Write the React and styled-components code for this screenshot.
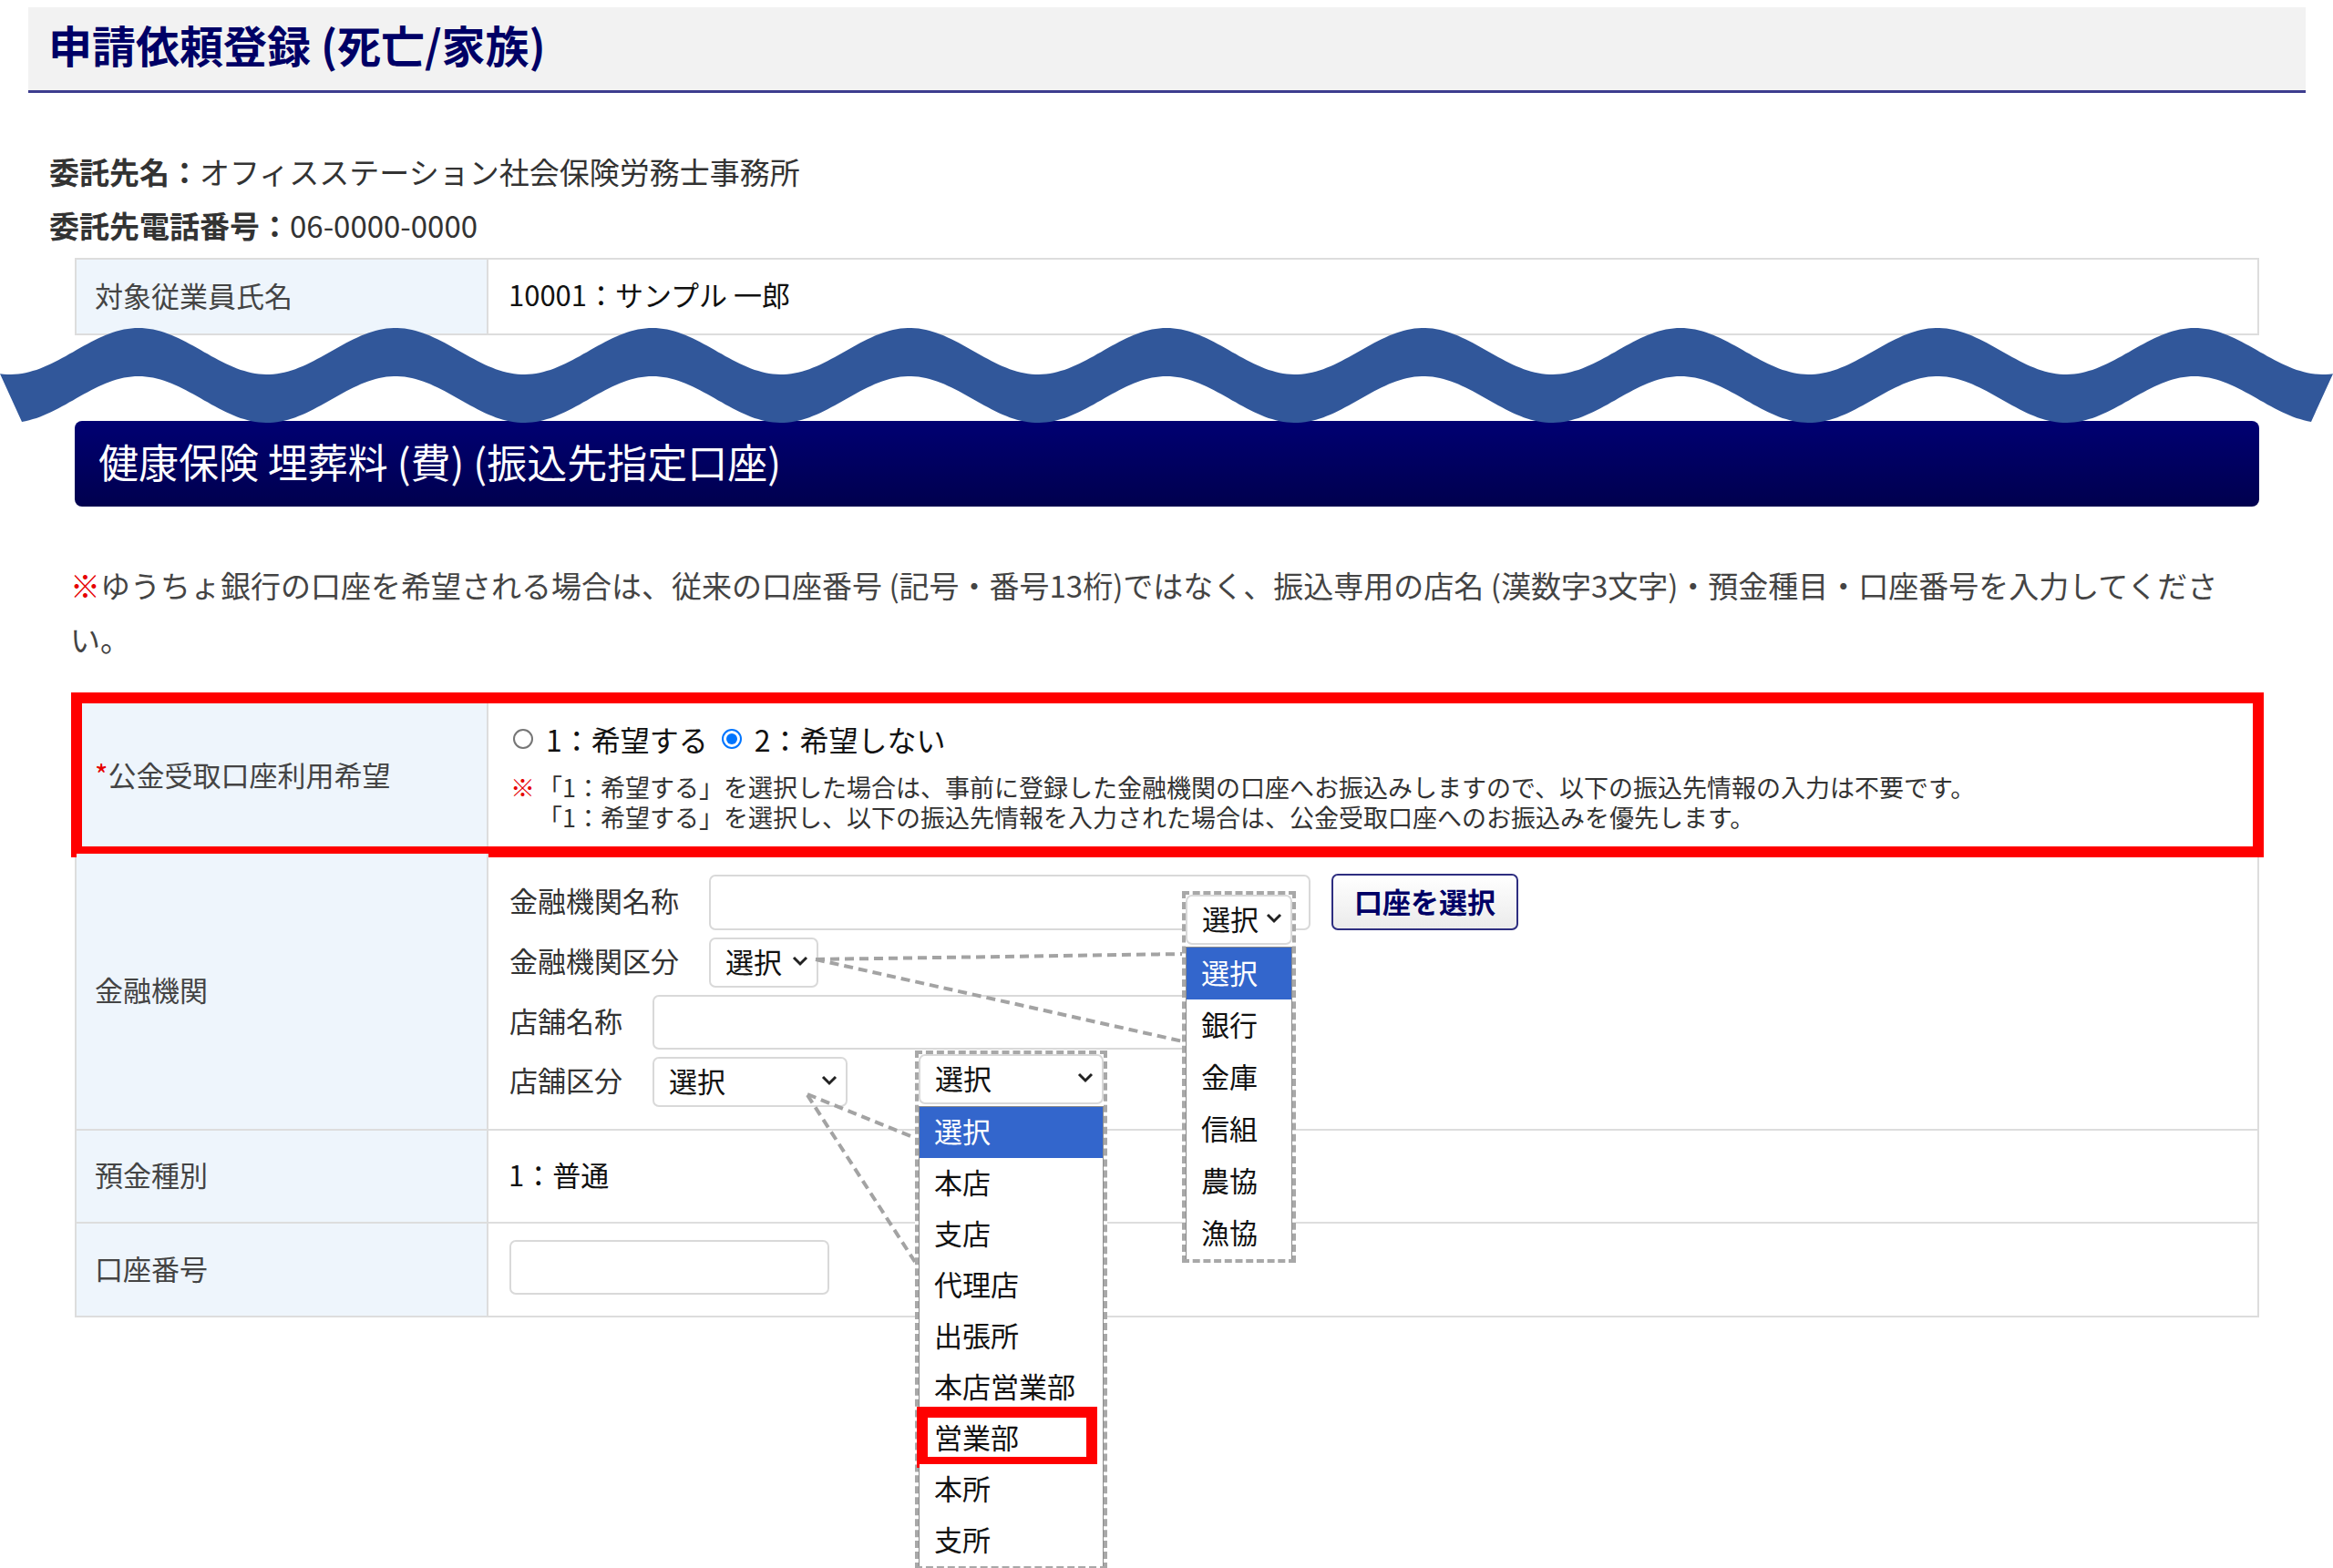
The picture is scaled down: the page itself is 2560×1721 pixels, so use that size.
import React from 'react'
import styled, { createGlobalStyle } from 'styled-components'

const GlobalStyle = createGlobalStyle`
html, body {
  margin: 0;
  padding: 0;
  background: #fff;
}
body {
  font-family: "Noto Sans CJK JP", "Noto Sans", sans-serif;
  color: #333;
}
`

const Page = styled.div`
width: 2560px;
min-height: 1721px;
box-sizing: border-box;
padding: 8px 30px 0 31px;
overflow: hidden;
`

const Header = styled.div`
height: 94px;
background: #f2f2f2;
border-bottom: 3px solid #3d3d8f;
display: flex;
align-items: center;
padding: 0 0 12px 22px;
box-sizing: border-box;
`

const Title = styled.h1`
margin: 0;
font-size: 48px;
font-weight: 700;
color: #000066;
`

const Info = styled.div`
margin-top: 57px;
padding-left: 23px;
font-size: 33px;
line-height: 59px;
color: #333;
& b{
  font-weight: 700;
}
`

const Table = styled.div`
margin: ${p => p.$top}px 51px 0;
border: 2px solid #ddd;
border-bottom: none;
`

const Row = styled.div`
position: relative;
display: grid;
grid-template-columns: 452px 1fr;
height: ${p => p.$h}px;
box-sizing: border-box;
border-bottom: 2px solid #ddd;

&::after{
  content: '';
  display: ${p => (p.$marked ? 'block' : 'none')};
  position: absolute;
  top: -9px;
  left: -6px;
  right: -7px;
  bottom: -6px;
  border: 12px solid #ff0000;
  pointer-events: none;
}
`

const Label = styled.div`
background: #eef5fc;
border-right: 2px solid #ddd;
display: flex;
align-items: center;
padding: 0 0 5px 20px;
font-size: 31px;
color: #444;
`

const Req = styled.span`
color: #e60000;
`

const Value = styled.div`
position: relative;
display: flex;
flex-direction: column;
justify-content: ${p => p.$align || 'center'};
padding: ${p => p.$pad || '0 22px 6px'};
font-size: 31px;
color: #111;
`

const WaveGap = styled.div`
position: relative;
height: 94px;
`

const WaveSvg = styled.svg`
position: absolute;
left: -31px;
top: -12px;
z-index: 2;
`

const Band = styled.div`
margin: 0 51px;
height: 94px;
box-sizing: border-box;
border-radius: 8px;
background: linear-gradient(#000072, #00004e);
color: #fff;
display: flex;
align-items: center;
padding: 0 0 6px 26px;
font-size: 44px;
`

const Notice = styled.p`
margin: 57px 0 0 46px;
width: 2372px;
font-size: 33px;
line-height: 59px;
color: #444;
`

const Mark = styled.span`
color: #e60000;
`

const RadioLine = styled.div`
display: flex;
align-items: center;
height: 44px;
font-size: 32px;
color: #111;
`

const Radio = styled.span`
width: 22px;
height: 22px;
box-sizing: border-box;
border-radius: 50%;
border: 2px solid ${p => (p.$on ? '#0075ff' : '#767676')};
margin: 0 14px 0 ${p => (p.$first ? '3px' : '15px')};
display: flex;
align-items: center;
justify-content: center;
&::after{
  content: '';
  display: ${p => (p.$on ? 'block' : 'none')};
  width: 12px;
  height: 12px;
  border-radius: 50%;
  background: #0075ff;
}
`

const Note = styled.div`
display: flex;
margin-top: 14px;
font-size: 27px;
line-height: 33px;
color: #333;
`

const NoteMark = styled.span`
color: #e60000;
width: 30px;
flex: none;
font-weight: 700;
`

const Form = styled.div`
display: flex;
flex-direction: column;
gap: 8px;
`

const FormLine = styled.div`
display: flex;
align-items: center;
`

const FormLabel = styled.span`
margin: 0 33px 6px 0;
font-size: 31px;
color: #333;
`

const Input = styled.div`
width: ${p => p.$w}px;
height: ${p => p.$h || 61}px;
box-sizing: border-box;
border: 2px solid #d9d9d9;
border-radius: 7px;
background: #fff;
`

const SelectBox = styled.div`
width: ${p => (p.$w ? `${p.$w}px` : 'auto')};
height: ${p => p.$h || 55}px;
box-sizing: border-box;
border: 2px solid #d9d9d9;
border-radius: 7px;
background: #fff;
display: flex;
align-items: center;
justify-content: space-between;
padding: 0 8px 4px 16px;
font-size: 31px;
color: #111;
`

const Button = styled.div`
margin-left: 23px;
width: 205px;
height: 62px;
box-sizing: border-box;
border: 2px solid #2e2e80;
border-radius: 7px;
background: linear-gradient(#ffffff, #ebebeb);
display: flex;
align-items: center;
justify-content: center;
padding-bottom: 4px;
font-size: 31px;
font-weight: 700;
color: #000066;
`

const Connectors = styled.svg`
position: absolute;
left: 0;
top: 0;
overflow: visible;
z-index: 2;
pointer-events: none;
`

const DropFrame = styled.div`
position: absolute;
left: ${p => p.$x}px;
top: ${p => p.$y}px;
width: ${p => p.$w}px;
box-sizing: border-box;
border: 4px dashed #a8a8a8;
background: #fff;
z-index: 3;
`

const OptionList = styled.div`
border: 1px solid #8c8c8c;
border-bottom: none;
margin-top: 2px;
`

const Option = styled.div`
position: relative;
height: ${p => p.$h}px;
box-sizing: border-box;
display: flex;
align-items: center;
padding: 0 0 5px 16px;
font-size: 31px;
color: ${p => (p.$active ? '#fff' : '#111')};
background: ${p => (p.$active ? '#3366cc' : '#fff')};

&::after{
  content: '';
  display: ${p => (p.$marked ? 'block' : 'none')};
  position: absolute;
  top: -7px;
  left: -3px;
  right: 6px;
  bottom: -4px;
  border: 12px solid #ff0000;
}
`

const Chevron = () => (
  <svg width="20" height="13" viewBox="0 0 20 13">
    <path d="M3 3 L10 10 L17 3" fill="none" stroke="#222" strokeWidth="3" />
  </svg>
)

const Dropdown = ({ x, y, w, h, items, marked }) => (
  <DropFrame $x={x} $y={y} $w={w}>
    <SelectBox>
      選択
      <Chevron />
    </SelectBox>
    <OptionList>
      {items.map((item, i) => (
        <Option key={item} $h={h} $active={i === 0} $marked={item === marked}>
          {item}
        </Option>
      ))}
    </OptionList>
  </DropFrame>
)

const wavePath = (() => {
  const top = x => 29.5 - 25.5 * Math.cos((2 * Math.PI * (x - 152)) / 282)
  let d = `M0 ${top(0).toFixed(1)}`
  for (let x = 4; x <= 2560; x += 4) d += ` L${x} ${top(x).toFixed(1)}`
  d += ` L2536 ${(top(2536) + 53).toFixed(1)}`
  for (let x = 2532; x >= 24; x -= 4) d += ` L${x} ${(top(x) + 53).toFixed(1)}`
  return d + ' Z'
})()

const bankTypes = ['選択', '銀行', '金庫', '信組', '農協', '漁協']
const branchTypes = ['選択', '本店', '支店', '代理店', '出張所', '本店営業部', '営業部', '本所', '支所']

const App = () => {
  return (
    <Page>
      <GlobalStyle />
      <Header>
        <Title>申請依頼登録 (死亡/家族)</Title>
      </Header>

      <Info>
        <div><b>委託先名：</b>オフィスステーション社会保険労務士事務所</div>
        <div><b>委託先電話番号：</b>06-0000-0000</div>
      </Info>

      <Table $top={6}>
        <Row $h={83}>
          <Label>対象従業員氏名</Label>
          <Value>10001：サンプル 一郎</Value>
        </Row>
      </Table>

      <WaveGap>
        <WaveSvg width="2560" height="120" viewBox="0 0 2560 120">
          <path d={wavePath} fill="#31579a" />
        </WaveSvg>
      </WaveGap>

      <Band>健康保険 埋葬料 (費) (振込先指定口座)</Band>

      <Notice>
        <Mark>※</Mark>ゆうちょ銀行の口座を希望される場合は、従来の口座番号 (記号・番号13桁)ではなく、振込専用の店名 (漢数字3文字)・預金種目・口座番号を入力してください。
      </Notice>

      <Table $top={36}>
        <Row $h={168} $marked>
          <Label><Req>*</Req>公金受取口座利用希望</Label>
          <Value $align="flex-start" $pad="20px 22px 0 24px">
            <RadioLine>
              <Radio $first />
              1：希望する
              <Radio $on />
              2：希望しない
            </RadioLine>
            <Note>
              <NoteMark>※</NoteMark>
              <div>
                「1：希望する」を選択した場合は、事前に登録した金融機関の口座へお振込みしますので、以下の振込先情報の入力は不要です。
                <br />
                「1：希望する」を選択し、以下の振込先情報を入力された場合は、公金受取口座へのお振込みを優先します。
              </div>
            </Note>
          </Value>
        </Row>

        <Row $h={304}>
          <Label>金融機関</Label>
          <Value $align="flex-start" $pad="22px 22px 0 23px">
            <Form>
              <FormLine>
                <FormLabel>金融機関名称</FormLabel>
                <Input $w={660} />
                <Button>口座を選択</Button>
              </FormLine>
              <FormLine>
                <FormLabel>金融機関区分</FormLabel>
                <SelectBox $w={120}>
                  選択
                  <Chevron />
                </SelectBox>
              </FormLine>
              <FormLine>
                <FormLabel>店舗名称</FormLabel>
                <Input $w={590} $h={60} />
              </FormLine>
              <FormLine>
                <FormLabel>店舗区分</FormLabel>
                <SelectBox $w={214}>
                  選択
                  <Chevron />
                </SelectBox>
              </FormLine>
            </Form>

            <Connectors width="800" height="500">
              <g stroke="#a3a3a3" strokeWidth="4" strokeDasharray="10 6" fill="none">
                <line x1="359" y1="116" x2="762" y2="110" />
                <line x1="359" y1="116" x2="762" y2="206" />
                <line x1="350" y1="264" x2="468" y2="312" />
                <line x1="350" y1="265" x2="468" y2="448" />
              </g>
            </Connectors>

            <Dropdown x={761} y={41} w={125} h={57} items={bankTypes} />
            <Dropdown x={468} y={216} w={211} h={56} items={branchTypes} marked="営業部" />
          </Value>
        </Row>

        <Row $h={102}>
          <Label>預金種別</Label>
          <Value>1：普通</Value>
        </Row>

        <Row $h={103}>
          <Label>口座番号</Label>
          <Value $align="flex-start" $pad="18px 22px 0 23px">
            <Input $w={351} $h={60} />
          </Value>
        </Row>
      </Table>
    </Page>
  )
}

export default App
